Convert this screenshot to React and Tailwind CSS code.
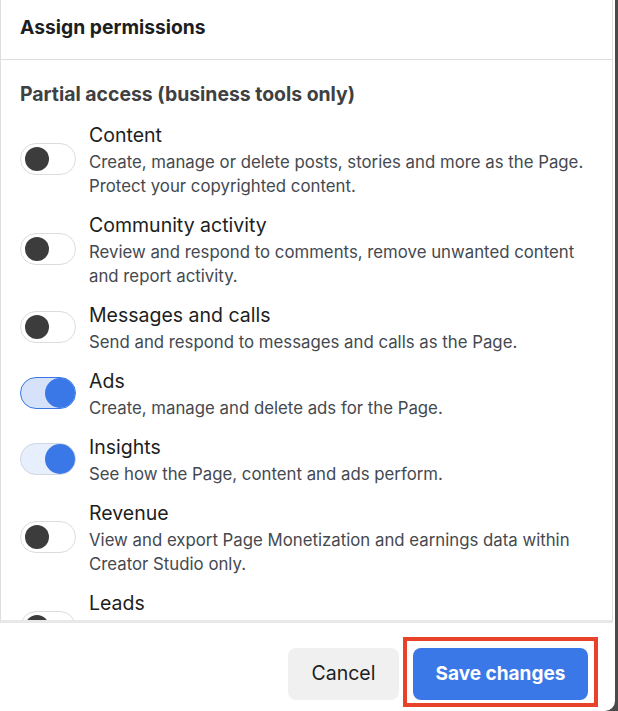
import { useState } from 'react';

const PERMISSIONS = [
  { id: 'content', title: 'Content', desc: 'Create, manage or delete posts, stories and more as the Page. Protect your copyrighted content.', on: false },
  { id: 'community', title: 'Community activity', desc: 'Review and respond to comments, remove unwanted content and report activity.', on: false },
  { id: 'messages', title: 'Messages and calls', desc: 'Send and respond to messages and calls as the Page.', on: false },
  { id: 'ads', title: 'Ads', desc: 'Create, manage and delete ads for the Page.', on: true, focused: true },
  { id: 'insights', title: 'Insights', desc: 'See how the Page, content and ads perform.', on: true },
  { id: 'revenue', title: 'Revenue', desc: 'View and export Page Monetization and earnings data within Creator Studio only.', on: false },
  { id: 'leads', title: 'Leads', desc: 'Access and manage leads, including downloading leads, creating lead ads and more.', on: false },
];

function Toggle({ on, focused, onClick }) {
  if (on) {
    return (
      <button
        onClick={onClick}
        className={`w-[56px] h-[32px] shrink-0 rounded-full flex items-center justify-end ${
          focused ? 'bg-[#d6e2f9] border-[1.5px] border-[#3a78e8]' : 'bg-[#e7eefc] border border-[#cfd6e4]'
        }`}
      >
        <span className="w-[30px] h-[30px] rounded-full bg-[#3a78e8]" />
      </button>
    );
  }
  return (
    <button onClick={onClick} className="w-[56px] h-[32px] shrink-0 rounded-full bg-white border border-[#dcdcdc] flex items-center pl-[4px]">
      <span className="w-[24px] h-[24px] rounded-full bg-[#3c3c3c]" />
    </button>
  );
}

export default function App() {
  const [perms, setPerms] = useState(PERMISSIONS);

  const flip = (id) => setPerms((p) => p.map((x) => (x.id === id ? { ...x, on: !x.on } : x)));

  return (
    <div className="w-[618px] h-[711px] bg-[#4a4a4a] flex font-['Inter',sans-serif] overflow-hidden">
      <div className="w-[615px] h-full bg-white rounded-br-[10px] flex flex-col">
        <div className="w-[613px] border-x border-[#dedede] border-b-[3px] border-b-[#e8e8e8] flex flex-col">
          {/* header */}
          <div className="h-[60px] border-b border-[#dedede] pl-[19px] pt-[15px]">
            <h1 className="text-[19.3px] leading-[24px] font-bold text-[#1c1e21]">Assign permissions</h1>
          </div>

          {/* scrolling list */}
          <div className="h-[560px] overflow-hidden pl-[19px] pr-[20px] pt-[22px]">
            <h2 className="text-[19.4px] leading-[24px] font-bold text-[#3e4042] mb-[14px]">Partial access (business tools only)</h2>
            <div className="flex flex-col gap-[12px]">
              {perms.map((p) => (
                <div key={p.id} className="flex items-center gap-[13px]">
                  <Toggle on={p.on} focused={p.focused} onClick={() => flip(p.id)} />
                  <div>
                    <div className="text-[19.5px] leading-[30px] text-[#1c1e21]">{p.title}</div>
                    <div className="text-[16.8px] leading-[24px] text-[#444950]">{p.desc}</div>
                  </div>
                </div>
              ))}
            </div>
          </div>
        </div>

        {/* footer */}
        <div className="flex justify-end items-start gap-[4px] pt-[14px] pr-[17px]">
          <button className="mt-[11px] h-[52px] w-[111px] rounded-lg bg-[#f0f0f0] text-[19.5px] text-[#1c1e21]">Cancel</button>
          <div className="border-4 border-[#e8432a] px-[6px] pt-[7px] pb-[3px]">
            <button className="h-[52px] w-[175px] rounded-lg bg-[#3a78e8] text-[19px] font-bold text-white">Save changes</button>
          </div>
        </div>
      </div>
    </div>
  );
}
